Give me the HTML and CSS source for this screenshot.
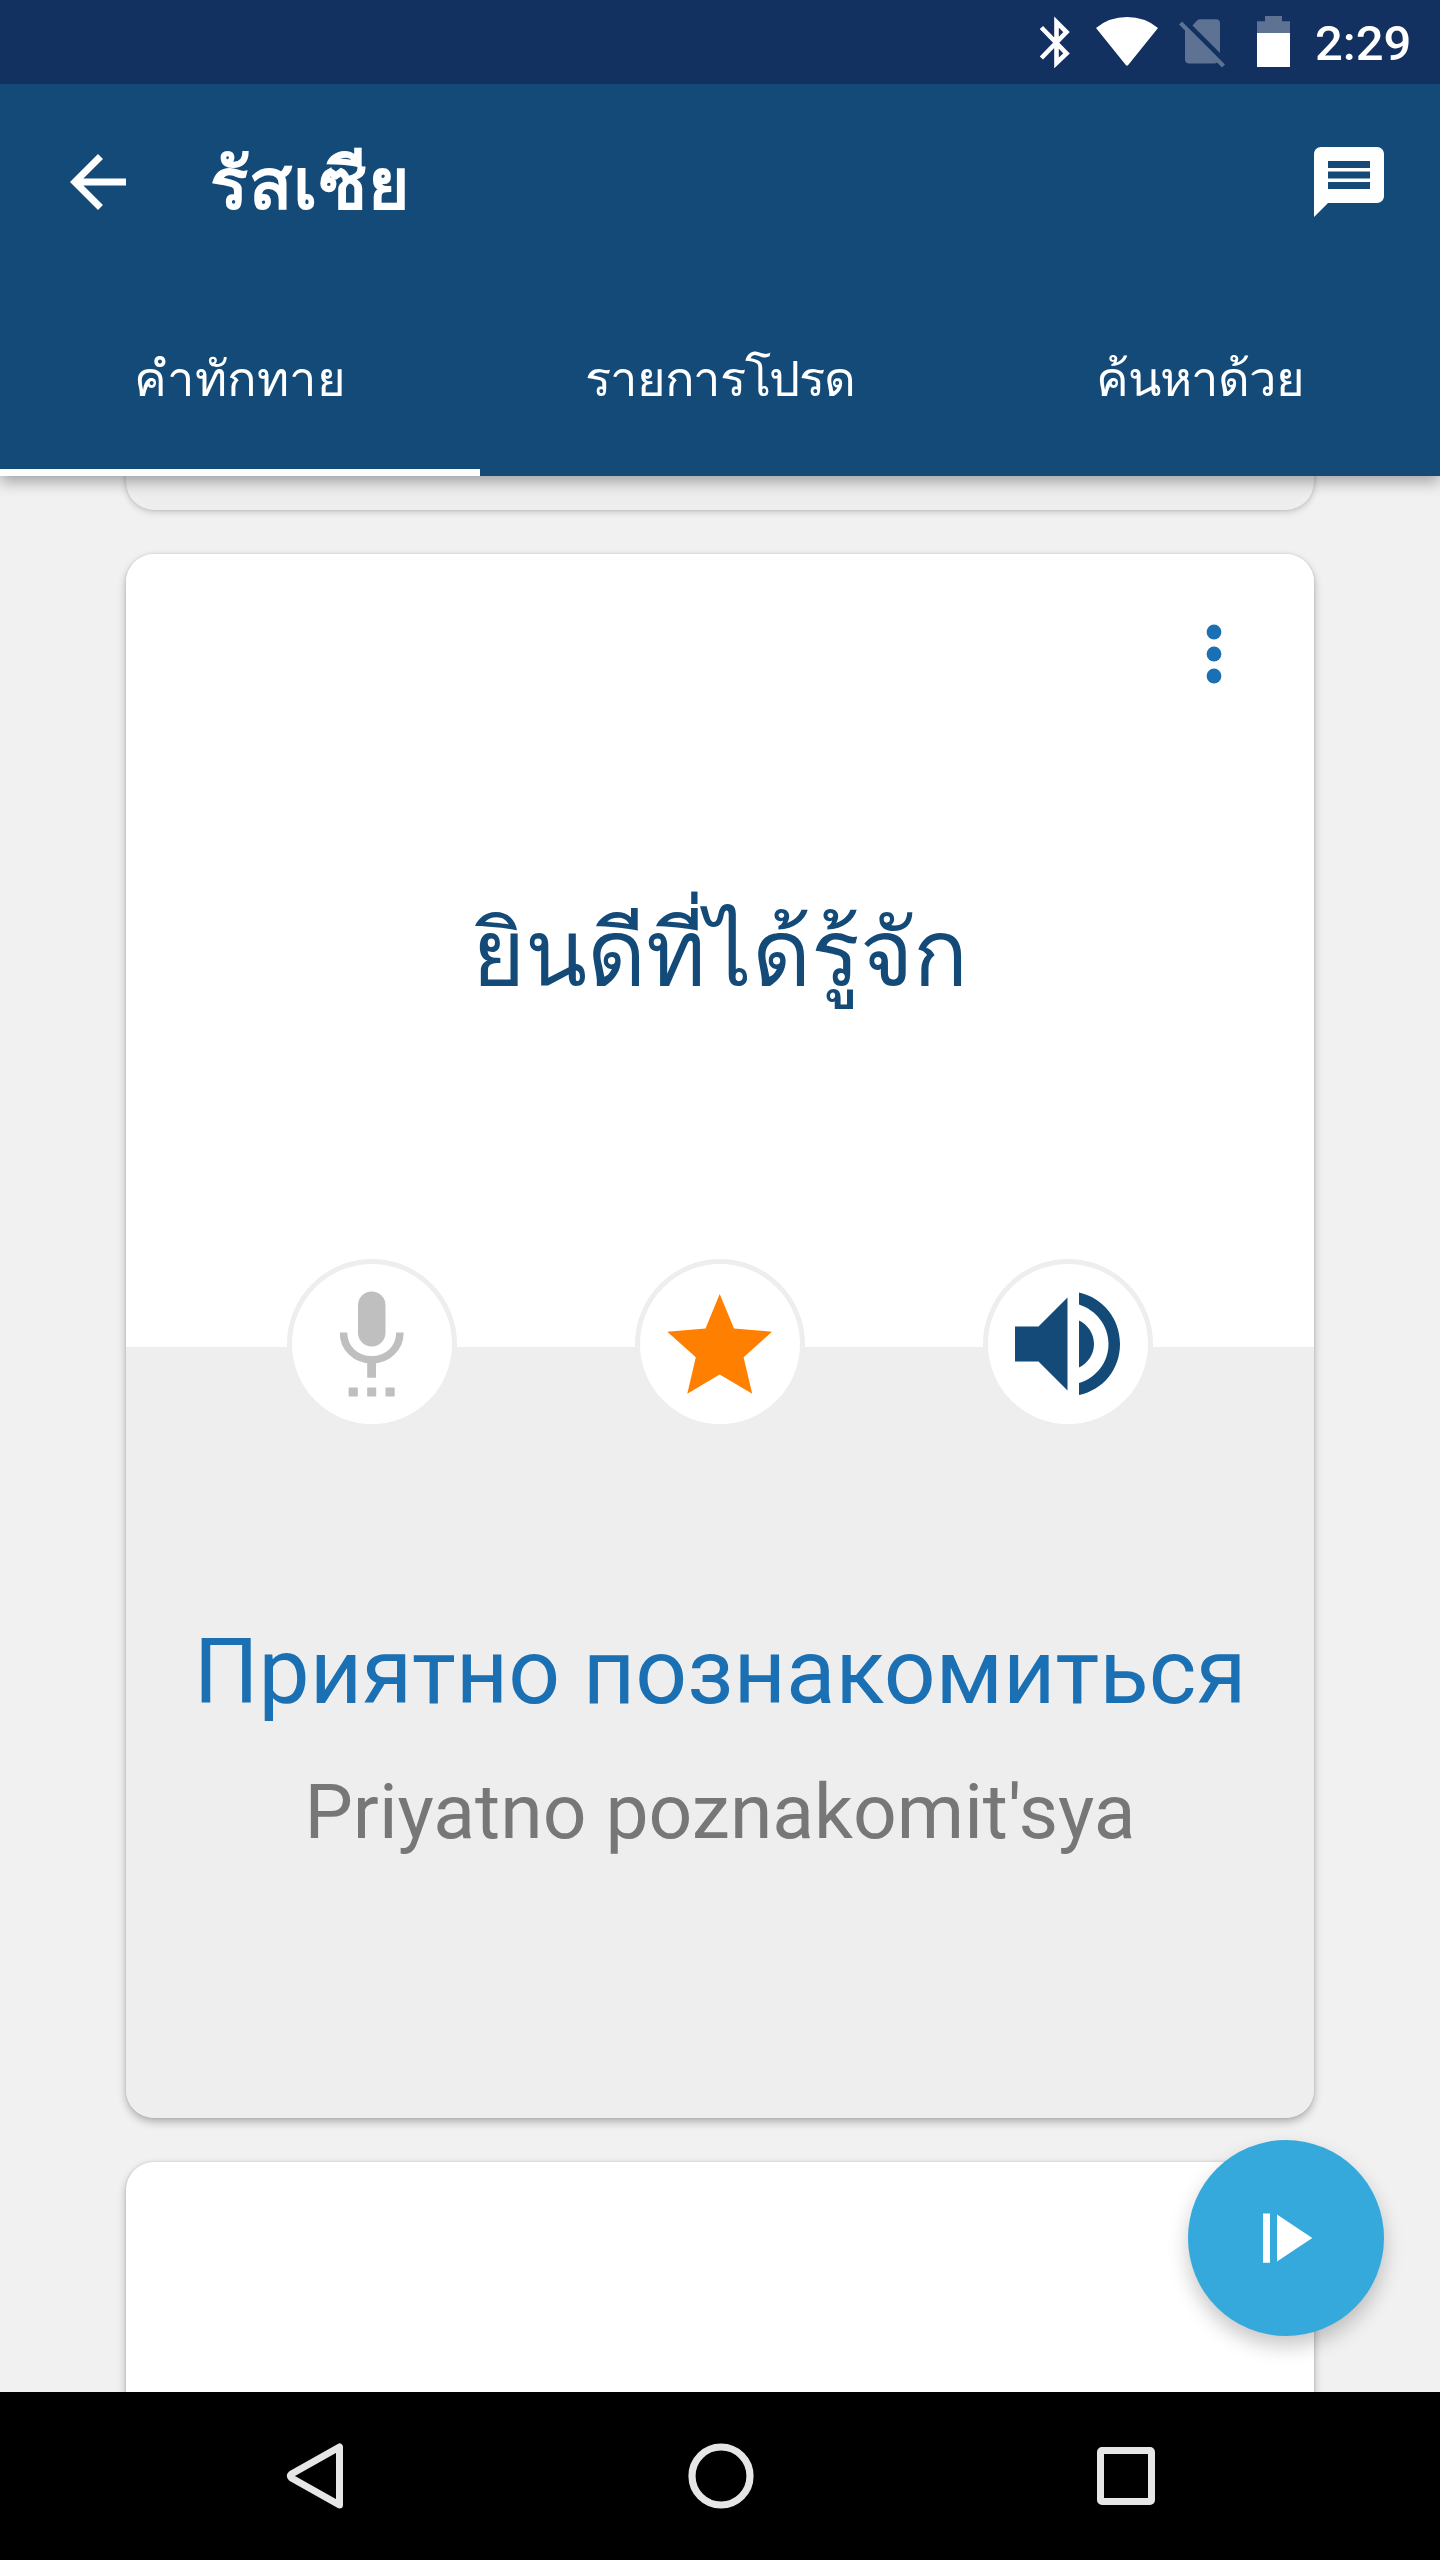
FILE: index.html
```html
<!DOCTYPE html>
<html lang="th">
<head>
<meta charset="utf-8">
<title>รัสเซีย</title>
<link rel="stylesheet" href="styles.css">
</head>
<body>
<div class="screen">
  <header class="header">
    <div class="status">
      <svg class="bluetooth" width="32" height="52" viewBox="1039 16 32 52"><path fill="none" stroke="#fff" stroke-width="4.6" d="M1041.400 27.500L1066.500 53.500L1056.500 63V22L1066.500 32L1041.400 58"/></svg>
      <svg class="wifi" width="64" height="52" viewBox="1095 16 64 52"><path fill="#fff" d="M1096 28Q1109 17 1127 17T1158 28L1129 64Q1127 67.500 1125 64Z"/></svg>
      <svg class="sim" width="48" height="52" viewBox="1178 16 48 52"><g fill="#5e7294"><path d="M1192.500 25.500L1197 20.500Q1198 19.300 1200 19.300H1216Q1220 19.300 1220 23.300V53Z"/><path d="M1185 29.500L1217.500 62Q1216.500 63.500 1214 63.500H1189.500Q1185 63.500 1185 59.500Z"/><path d="M1179 24.500L1182 21.500L1225 64.500L1222 67.500Z"/></g></svg>
      <svg class="battery" width="33" height="52" viewBox="1257 16 33 52"><path fill="#5e7294" d="M1265 16H1282V21.300H1290V34H1257V21.300H1265Z"/><path fill="#fff" d="M1257 33H1290V67H1257Z"/></svg>
      <span class="clock">2:29</span>
    </div>
    <div class="toolbar">
      <svg width="84" height="84" viewBox="0 0 24 24"><path fill="#fff" d="M20 11H7.830l5.590-5.590L12 4l-8 8 8 8 1.410-1.410L7.830 13H20v-2z"/></svg>
      <h1 class="title">รัสเซีย</h1>
      <svg width="84" height="84" viewBox="0 0 24 24"><path fill="#fff" d="M20 2H4c-1.100 0-1.990.9-1.990 2L2 22l4-4h14c1.100 0 2-.9 2-2V4c0-1.100-.9-2-2-2zm-2 12H6v-2h12v2zm0-3H6V9h12v2zm0-3H6V6h12v2z"/></svg>
    </div>
    <nav class="tabs">
      <div class="tab active"><span>คำทักทาย</span></div>
      <div class="tab favorites"><span>รายการโปรด</span></div>
      <div class="tab search"><span>ค้นหาด้วย</span></div>
    </nav>
  </header>
  <main class="list">
    <section class="card previous"></section>
    <section class="card phrase">
      <div class="front">
        <svg class="more" width="16" height="60" viewBox="0 0 16 60"><g fill="#1b70b3"><circle cx="8" cy="8" r="7.400"/><circle cx="8" cy="30" r="7.400"/><circle cx="8" cy="52" r="7.400"/></g></svg>
        <p class="source">ยินดีที่ได้รู้จัก</p>
      </div>
      <div class="actions">
        <div class="action"><svg width="160" height="160" viewBox="292 1263.500 160 160"><g fill="#bfbfbf"><rect x="358" y="1291" width="27.500" height="55" rx="13.750"/><path d="M367.200 1360H376V1377.300H367.200ZM348.600 1387H357.800V1396H348.600ZM367.200 1387H376.200V1396H367.200ZM385.500 1387H394.700V1396H385.500Z"/></g><path fill="none" stroke="#bfbfbf" stroke-width="7.500" d="M343.500 1332C343.500 1348 356 1359.300 371.700 1359.300S399.900 1348 399.900 1332"/></svg></div>
        <div class="action"><svg width="160" height="160" viewBox="640 1263.500 160 160"><path fill="#ff8000" d="M719.700 1293.500L734 1328L772 1331.200L743.600 1356.700L752.200 1393.200L719.700 1374L687.300 1393.200L695.800 1356.700L667.300 1331.200L705.500 1328Z"/></svg></div>
        <div class="action"><svg width="160" height="160" viewBox="988 1263.500 160 160"><path fill="#134a78" d="M1015 1326H1038.500L1067.500 1297V1390L1038.500 1361H1015ZM1079 1320C1088 1324.500 1094 1333 1094 1343.500S1088 1362.500 1079 1367ZM1079 1292C1103 1297.500 1120 1318 1120 1343.500S1103 1389.500 1079 1394.500V1382.500C1096 1377.500 1108.500 1362 1108.500 1343.500S1096 1309.500 1079 1304Z"/></svg></div>
      </div>
      <div class="back">
        <p class="target">Приятно познакомиться</p>
        <p class="reading">Priyatno poznakomit'sya</p>
      </div>
    </section>
    <section class="card next"></section>
  </main>
  <button class="fab" aria-label="Play"><svg width="196" height="196" viewBox="1188 2140 196 196"><path fill="#fff" d="M1263 2213.500H1270V2262.700H1263ZM1277 2214.500L1312.300 2238L1277 2261.500Z"/></svg></button>
  <footer class="navbar">
    <svg width="58" height="68" viewBox="0 0 58 68"><path fill="none" stroke="#e6e6e6" stroke-width="7" stroke-linejoin="round" d="M53.500 5V63L5.500 36Q3.500 34 5.500 32Z"/></svg>
    <svg width="68" height="68" viewBox="0 0 68 68"><circle cx="34" cy="34" r="29" fill="none" stroke="#e6e6e6" stroke-width="7.200"/></svg>
    <svg width="58" height="68" viewBox="0 0 58 68"><rect x="3.500" y="8.500" width="51" height="51" rx="1.500" fill="none" stroke="#e6e6e6" stroke-width="7"/></svg>
  </footer>
</div>
</body>
</html>
```
FILE: styles.css
```css
* { box-sizing: border-box; }
body { margin: 0; }
h1, p { margin: 0; font-weight: 400; }
svg { display: block; flex: none; }

.screen {
  position: relative;
  display: flex;
  flex-direction: column;
  width: 1440px;
  height: 2560px;
  overflow: hidden;
  background: #f1f1f1;
  font-family: Roboto, "Droid Sans Thai", "DejaVu Sans", sans-serif;
}

.header {
  position: relative;
  z-index: 1;
  height: 476px;
  background: #134a78;
  color: #fff;
  box-shadow: 0 6px 14px rgba(0, 0, 0, .32);
}
.status {
  display: flex;
  height: 84px;
  padding: 16px 27px 0 0;
  justify-content: flex-end;
  background: #123160;
}
.bluetooth { margin-right: 24px; }
.wifi { margin-right: 19px; }
.sim { margin-right: 31px; }
.battery { margin-right: 25px; }
.clock { width: 98px; font-size: 49px; font-weight: 500; line-height: 55px; }

.toolbar {
  display: flex;
  align-items: center;
  height: 196px;
  padding: 0 49px 0 56px;
}
.title {
  flex: 1;
  padding: 5px 0 0 70px;
  font-size: 71px;
  font-weight: 700;
  letter-spacing: 1.200px;
  line-height: 100px;
}
.tabs { display: flex; height: 196px; }
.tab {
  display: flex;
  flex: 1;
  align-items: center;
  justify-content: center;
  padding-top: 10px;
  border-bottom: 7px solid transparent;
  font-size: 49px;
  line-height: 70px;
  white-space: nowrap;
}
.active { border-color: #fff; }
.favorites { letter-spacing: -1.300px; }
.search { letter-spacing: -1.100px; }

.list {
  display: flex;
  flex: 1;
  flex-direction: column;
  gap: 44px;
  min-height: 0;
  overflow: hidden;
  padding: 0 126px;
}
.card {
  flex: none;
  border-radius: 28px;
  box-shadow: 0 4px 9px rgba(0, 0, 0, .27), 0 0 3px rgba(0, 0, 0, .12);
}
.previous { height: 134px; margin-top: -100px; background: #eee; box-shadow: 0 2px 7px rgba(0, 0, 0, .18), 0 0 3px rgba(0, 0, 0, .12); }
.phrase { display: flex; flex-direction: column; height: 1564px; }
.front {
  display: flex;
  flex-direction: column;
  height: 793px;
  background: #fff;
  border-radius: 28px 28px 0 0;
  text-align: center;
}
.more { align-self: flex-end; margin: 70px 92px 0 0; }
.source {
  margin-top: 190px;
  color: #134a78;
  font-size: 91px;
  line-height: 160px;
}
.actions {
  z-index: 1;
  display: flex;
  justify-content: space-between;
  height: 170px;
  margin: -88.500px 161px -81.500px;
}
.action {
  width: 170px;
  height: 170px;
  border: 5px solid #eee;
  border-radius: 50%;
  background: #fff;
}
.back {
  flex: 1;
  padding-top: 270px;
  background: #eee;
  border-radius: 0 0 28px 28px;
  text-align: center;
  white-space: nowrap;
}
.target { color: #1b70b3; font-size: 91px; line-height: 110px; }
.reading { margin-top: 39px; color: #777; font-size: 76.800px; line-height: 92px; }
.next { height: 300px; background: #fff; }

.fab {
  position: absolute;
  top: 2140px;
  left: 1188px;
  z-index: 2;
  width: 196px;
  height: 196px;
  padding: 0;
  border: 0;
  border-radius: 50%;
  background: #35a8dc;
  box-shadow: 0 10px 20px rgba(0, 0, 0, .22);
}

.navbar {
  z-index: 1;
  display: flex;
  justify-content: space-between;
  height: 168px;
  padding: 50px 285px 0 286px;
  background: #000;
}
```
